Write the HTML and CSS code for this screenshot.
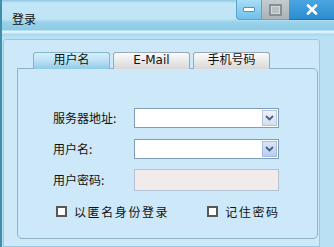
FILE: index.html
```html
<!DOCTYPE html>
<html>
<head>
  <title>登录</title>
  <link rel="stylesheet" href="styles.css">
</head>
<body>
  <div class="window">
    <div class="titlebar">
      <span class="title">登录</span>
      <div class="ctrls">
        <div class="btn min"><span class="dash"></span></div>
        <div class="btn max"><span class="box"></span></div>
        <div class="btn close">
          <svg width="12" height="11" viewBox="0 0 12 11"><path d="M2 1.5 L10 9.5 M10 1.5 L2 9.5" stroke="#fff" stroke-width="2.6" stroke-linecap="round"/></svg>
        </div>
      </div>
    </div>
    <div class="client">
      <div class="tabs">
        <div class="tab active">用户名</div>
        <div class="tab">E-Mail</div>
        <div class="tab">手机号码</div>
      </div>
      <div class="panel">
        <div class="row">
          <label>服务器地址:</label>
          <div class="combo"><span class="drop"><svg width="9" height="6" viewBox="0 0 9 6"><path d="M1 1 L4.5 4.5 L8 1" fill="none" stroke="#4a5f86" stroke-width="1.8"/></svg></span></div>
        </div>
        <div class="row">
          <label>用户名:</label>
          <div class="combo"><span class="drop hot"><svg width="9" height="6" viewBox="0 0 9 6"><path d="M1 1 L4.5 4.5 L8 1" fill="none" stroke="#4a5f86" stroke-width="1.8"/></svg></span></div>
        </div>
        <div class="row">
          <label>用户密码:</label>
          <div class="field disabled"></div>
        </div>
        <div class="checks">
          <div class="check"><span class="cb"></span>以匿名身份登录</div>
          <div class="check"><span class="cb"></span>记住密码</div>
        </div>
      </div>
    </div>
  </div>
</body>
</html>
```

FILE: styles.css
```css
body { margin: 0; font-family: "Noto Sans CJK SC", "DejaVu Sans", sans-serif; font-size: 12px; color: #111; }
.window { width: 334px; height: 247px; background: #b9e0f3; border-left: 2px solid #3f8fab; box-sizing: border-box; overflow: hidden; }

.titlebar { height: 37px; display: flex; justify-content: space-between; position: relative;
  background: linear-gradient(#8ec6e0 0, #c3e6f7 3px, #bfe4f6 19px, #9ad2ea 22px, #8ccae5 30px, #e2f5fc 31px, #d4eff9 33px, #a6d8ee 34px, #b9e0f3 37px); }
.title { padding: 11px 0 0 10px; line-height: 16px; }
.ctrls { display: flex; height: 20px; }
.btn { display: flex; align-items: center; justify-content: center; box-sizing: border-box; }
.min { width: 26px; background: linear-gradient(#a9def6, #6fc0ea); border: 1px solid #5aa3cb; border-top: none; border-radius: 0 0 0 4px; }
.dash { width: 10px; height: 3px; background: #fff; border: 1px solid #4f97c2; border-radius: 1px; }
.max { width: 27px; background: linear-gradient(#c5ccd0, #aab3b8); border-bottom: 1px solid #8f999e; }
.box { width: 9px; height: 8px; border: 2px solid #888f94; background: #b9c0c4; box-shadow: inset 0 0 0 1px #d4d9dc; }
.close { width: 45px; background: linear-gradient(#4aa6e0, #2b8ccf); border-bottom: 1px solid #2276b0; }

.client { margin: 2px 14px 0 1px; height: 208px; background: #cde9f9; border: 1px solid #9cc8de; border-radius: 3px 3px 0 0; padding: 12px 2px 0 13px; box-sizing: border-box; }
.tabs { display: flex; gap: 3px; margin-left: 16px; height: 16px; }
.tab { width: 77px; box-sizing: border-box; height: 17px; text-align: center; font-family: "DejaVu Sans", "Noto Sans CJK SC", sans-serif; font-size: 12px; line-height: 15px;
  border: 1px solid #9aa9b6; border-bottom: none; border-radius: 3px 3px 0 0; background: linear-gradient(#fbfbfb, #e9e9e9 50%, #d8d8d8); }
.tab.active { background: linear-gradient(#d6effb, #bfe2f5 45%, #8fcbe8); border-color: #88b4cc; }

.panel { width: 301px; height: 171px; box-sizing: border-box; border: 1px solid #8fb1c5; border-radius: 0 5px 5px 5px; background: #cde9f9; padding: 38px 0 0 35px; }
.row { display: flex; align-items: center; height: 21px; margin-bottom: 10px; }
.row label { width: 81px; }
.combo, .field { width: 145px; height: 20px; box-sizing: border-box; border: 1px solid #7f9db9; background: #fff; display: flex; justify-content: flex-end; align-items: center; padding-right: 1px; }
.field.disabled { height: 22px; background: #f1ebeb; border-color: #b3c3d2; }
.drop { width: 15px; height: 16px; box-sizing: border-box; border: 1px solid #b4c6df; background: linear-gradient(#eef3fb, #d3def0); display: flex; align-items: center; justify-content: center; }
.drop.hot { background: linear-gradient(#dbe6f7, #b9cdf0); border-color: #a5bbe0; }

.checks { display: flex; margin-top: 15px; margin-left: 3px; }
.check { display: flex; align-items: center; letter-spacing: 1.6px; line-height: 13px; }
.check + .check { margin-left: 38px; }
.cb { width: 11px; height: 11px; box-sizing: border-box; border: 2px solid #575757; background: #fff; margin-right: 7px; }
```
